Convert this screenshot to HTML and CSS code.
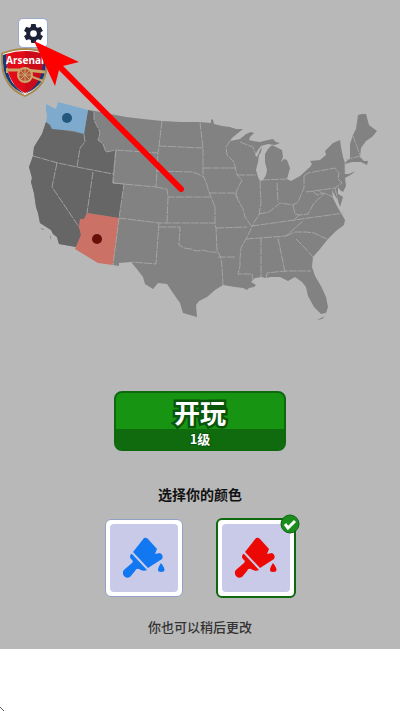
FILE: index.html
```
<!DOCTYPE html>
<html lang="zh-CN">
<head>
  <meta charset="UTF-8" />
  <meta name="viewport" content="width=device-width, initial-scale=1" />
  <title>开玩</title>
  <link rel="stylesheet" href="styles.css">
</head>
<body>
  <main class="screen">
    <header class="topbar">
      <button class="settings-btn" type="button" aria-label="设置">
        <svg viewBox="0 0 24 24" width="23" height="23"><path fill="#1c2138" d="M19.4 13c0-.3.1-.6.1-1s0-.7-.1-1l2.1-1.600a.5.5 0 0 0 .1-.6l-2-3.500a.5.5 0 0 0-.6-.2l-2.500 1a7 7 0 0 0-1.700-1l-.4-2.600a.5.5 0 0 0-.5-.5h-4a.5.5 0 0 0-.5.5L9.100 5.100a7 7 0 0 0-1.700 1l-2.500-1a.5.5 0 0 0-.6.2l-2 3.500a.5.5 0 0 0 .1.6L4.500 11a8 8 0 0 0 0 2l-2.100 1.600a.5.5 0 0 0-.1.6l2 3.500c.1.2.4.3.6.2l2.500-1c.5.4 1.100.7 1.700 1l.4 2.600c0 .3.2.5.5.5h4c.3 0 .5-.2.5-.5l.4-2.600a7 7 0 0 0 1.700-1l2.500 1c.2.1.5 0 .6-.2l2-3.500a.5.5 0 0 0-.1-.6zM12 15.500a3.500 3.500 0 1 1 0-7 3.500 3.500 0 0 1 0 7z"/></svg>
      </button>
    </header>

    <svg class="club-badge" viewBox="0 0 50 52" role="img" aria-label="Arsenal">
      <path fill="#a88a50" d="M1 6Q13 1 25 1t23 5q1 20-5 30-6 9-18 14Q12 45 7 36 0 26 1 6z"/>
      <path fill="#fff" d="M3 7Q14 3 25 3t21 4q1 18-5 28-5 8-16 13Q14 43 9 35 2 26 3 7z"/>
      <path fill="#123a78" d="M3 8l3-1q0 18 6 28 5 7 13 12Q14 43 9 35 2 26 3 8zM46 8l-3-1q0 18-6 28-5 7-12 12 11-5 16-12 6-9 5-27z"/>
      <path fill="#e30b17" d="M6 7q9-3 19-3t18 3q1 18-5 27-4 8-13 12-9-4-13-12Q6 25 6 7z"/>
      <path fill="#b80c1b" d="M25 4q10 0 18 3 1 18-5 27-4 8-13 12z" opacity=".55"/>
      <g stroke="#c9a66a" fill="none">
        <path stroke-width="3" d="M7 23h18l20 2"/>
        <path stroke-width="2" d="M30 29l13 5M7 21v5"/>
        <circle cx="25" cy="28" r="7" stroke-width="2" fill="#b8543b"/>
        <path stroke-width="1" d="M25 21v14M18 28h14M20 23l10 10M30 23L20 33"/>
      </g>
      <text class="club-name" x="25" y="17" text-anchor="middle">Arsenal</text>
    </svg>

    <svg class="arrow" viewBox="0 0 160 160" aria-hidden="true">
      <path stroke="#fe0000" stroke-width="6" stroke-linecap="round" d="M27 24l124 125"/>
      <path fill="#fe0000" d="M4 1l45 21-16 4-4 4-4 16z"/>
    </svg>

    <svg class="map" viewBox="0 96 400 230" role="img" aria-label="美国地图">
      <path class="land" d="M88 110L95 111 110 114 126 117 143 119 162 121 181 122 200 122 211 123 211 119 213 120 214 124 222 126 230 127 236 129 243 129 238 133 232 138 230 141 235 140 240 139 246 134 251 132 254 133 250 137 249 140 253 141 260 142 268 140 273 139 276 142 280 143 275 145 268 144 261 146 258 150 255 155 257 157 260 150 262 147 261 152 259 155 258 162 256 170 258 177 260 181 263 180 266 175 267 170 265 162 265 154 268 149 272 145 278 148 282 150 283 157 281 162 284 159 287 160 290 168 287 179 291 181 300 176 310 167 312 164 310 161 320 160 326 155 325 151 333 143 340 140 341 147 343 157 345 163 350 158 350 144 353 135 356 129 358 115 362 114 366 114 369 125 377 131 372 137 366 141 361 148 360 157 364 161 368 161 367 165 361 162 352 162 345 164 345 174 349 174 355 171 352 174 345 178 346 186 343 192 340 190 338 187 338 194 343 197 340 207 338 201 334 194 332 190 333 198 338 208 341 213 345 220 344 225 336 231 328 239 320 249 313 257 312 267 315 276 321 286 326 297 328 307 326 313 321 314 314 307 308 296 306 287 302 282 295 277 288 281 280 277 271 277 265 278 262 277 255 278 251 282 256 285 254 287 249 288 247 290 243 288 235 287 223 285 215 290 207 297 199 301 196 305 197 317 190 315 183 313 180 303 173 293 167 284 158 283 153 289 145 284 143 277 136 268 131 262 119 263 119 266 113 265 76 247 59 244 57 237 53 234 51 230 40 223 38 213 36 207 35 200 34 193 31 182 32 178 29 167 33 156 34 147 42 134 46 122z"/>
      <path class="land" d="M325 316l-8 4 5-1zM40 228l4 1-1 1zM50 237l1-2 0 5z"/>
      <path class="dark" d="M46 122L63 130 84 134 88 110 94 112 94 120 99 129 100 133 98 140 102 143 106 152 115 150 112 183 124 184 119 218 87 213 84 219 80 219 79 227 81 235 76 247 59 244 57 237 53 234 51 230 40 223 38 213 36 207 35 200 34 193 31 182 32 178 29 167 33 156 34 147 42 134z"/>
      <path class="blue" d="M46 104L52 107 56 109 58 102 73 106 88 110 84 134 74 131 63 130 52 129 50 125 46 122 47 117 46 110z"/>
      <path class="red" d="M87 213L119 218 113 265 98 263 75 249 81 235 79 227 80 219 84 219z"/>
      <g class="borders">
        <path d="M84 134l1 8-5 6-3 19M33 156l25 7 19 4 36 7M57 163l-5 24 27 40M93 172l-6 41M94 112l0 8 5 10 1 3-2 7 5 4 3 8 10-2"/>
        <path d="M116 150l42 3-2 34-43-4zM113 183l11 1-5 34-6 47M156 187l11 2 1 8h42M168 197l-1 26M119 218l40 5h56M159 223l-3 41-25-2M159 227h21l-1 18 5 3 7 1 5 2 7-1 7 2 7 0"/>
        <path d="M162 121l-3 25-1 7M159 146l44 2M157 171l35 1 6 2 6 3 3 8 2 7 6 15M200 122l3 26 0 27M203 168h33M209 193h26l2 5M215 207l0 17 1 4 1 22 4 8 1 9 1 18M216 228l31-1M218 257h17"/>
        <path d="M230 141L226 147 227 155 234 162 237 175 242 180 236 192 238 200 243 209 245 217 252 227 246 239 241 248 240 258 240 266 238 274H252L253 280M237 175H256M240 142L253 147 256 155M260 181L261 203 259 215 254 222 252 227M259 214L269 212 280 203 293 205M277 183L278 202M262 180L287 179M304 176L304 188 298 202 293 205"/>
        <path d="M252 226L344 213M246 239L286 236 303 221M261 238V277M278 238L285 272M266 278L267 273 285 271 311 271M286 236L295 232 306 232 314 233 327 239M296 239L304 247 313 257"/>
        <path d="M293 205L295 214 300 215 308 214 314 203 324 194 318 191M299 215L293 221M304 176L308 173 335 168 339 173 338 179 342 183 335 188 306 192M313 191L317 195 324 193 333 197M335 188L338 201M345 163V174M345 160L360 156M353 136L360 155"/>
      </g>
      <circle cx="67" cy="118" r="5" fill="#23577d"/>
      <circle cx="97" cy="239" r="5" fill="#67100a"/>
    </svg>

    <button class="play-btn" type="button">
      <span class="play-label">开玩</span>
      <span class="play-level">1级</span>
    </button>

    <fieldset class="colors">
      <legend>选择你的颜色</legend>
      <div class="swatches">
        <label class="swatch swatch-blue">
          <input type="radio" name="color" value="blue" aria-label="蓝色">
          <svg class="brush" viewBox="0 0 42 42"><path d="M21 1q2-1 4 1l9 10-2 5 5-1q4 2 2 6L25 31 10 15zM9 17l15 16q-4 2-8-1-3-1-4 2l-5 6q-4 2-6-1-3-4 1-7l7-6q2-2-1-4-2-2 0-5zM38 26q7 9 0 9-6 0 0-9z"/></svg>
        </label>
        <label class="swatch swatch-red">
          <input type="radio" name="color" value="red" aria-label="红色" checked>
          <svg class="brush" viewBox="0 0 42 42"><path d="M21 1q2-1 4 1l9 10-2 5 5-1q4 2 2 6L25 31 10 15zM9 17l15 16q-4 2-8-1-3-1-4 2l-5 6q-4 2-6-1-3-4 1-7l7-6q2-2-1-4-2-2 0-5zM38 26q7 9 0 9-6 0 0-9z"/></svg>
          <svg class="check" viewBox="0 0 20 20"><circle cx="10" cy="10" r="9" fill="#1b8d1b" stroke="#0c640f" stroke-width="1"/><path d="M5 10l3 4 7-7" fill="none" stroke="#fff" stroke-width="3"/></svg>
        </label>
      </div>
    </fieldset>

    <p class="hint">你也可以稍后更改</p>
  </main>

  <footer class="bottom">
    <svg viewBox="0 0 4 4" width="4" height="4" aria-hidden="true"><path d="M0 0l4 4" stroke="#555"/></svg>
  </footer>
</body>
</html>
```
FILE: styles.css
```
* {
  box-sizing: border-box;
}

body {
  margin: 0;
  min-height: 100vh;
  display: flex;
  flex-direction: column;
  background: #fff;
  font-family: "Noto Sans CJK SC", sans-serif;
}

svg {
  display: block;
}

.screen {
  position: relative;
  display: flex;
  flex-direction: column;
  align-items: center;
  padding-bottom: 11px;
  background: #b8b8b8;
}

.topbar {
  width: 100%;
  height: 96px;
  padding: 18px;
}

.settings-btn {
  display: flex;
  align-items: center;
  justify-content: center;
  width: 30px;
  height: 30px;
  padding: 0;
  background: #fff;
  border: 1px solid #9ba8d0;
  border-radius: 5px;
}

/* badge and pointer lie over the map */
.club-badge {
  position: absolute;
  top: 47px;
  left: 0;
  width: 50px;
  height: 52px;
}

.club-name {
  font: bold 10px "Noto Sans", sans-serif;
  fill: #fff;
}

.arrow {
  position: absolute;
  top: 40px;
  left: 30px;
  width: 160px;
  height: 160px;
}

.map {
  width: 100%;
}

.land {
  fill: #828282;
}

.dark {
  fill: #666;
}

.blue {
  fill: #7eabcd;
}

.red {
  fill: #cb7165;
}

.borders {
  fill: none;
  stroke: #adadad;
  stroke-width: 1;
  stroke-dasharray: 8 1;
  opacity: 0.8;
}

.play-btn {
  display: flex;
  flex-direction: column;
  width: 172px;
  margin-top: 65px;
  padding: 0;
  overflow: hidden;
  border: 2px solid #0d680e;
  border-radius: 8px;
  background: #189413;
  color: #fff;
  font-family: inherit;
  font-weight: 700;
}

.play-label,
.play-level {
  width: 100%;
  -webkit-text-stroke: 5px #0b550b;
  paint-order: stroke fill;
}

.play-label {
  padding-top: 2px;
  font-size: 26px;
  line-height: 34px;
}

.play-level {
  background: #0f6b0d;
  font-size: 13px;
  line-height: 20px;
  -webkit-text-stroke-width: 2px;
}

.colors {
  margin: 32px 0 0;
  padding: 0;
  border: 0;
}

legend {
  margin: 0 auto;
  padding: 0;
  color: #111;
  font-size: 14px;
  font-weight: 700;
  line-height: 22px;
}

.swatches {
  display: flex;
  align-items: center;
  gap: 33px;
  margin-top: 13px;
}

.swatch {
  position: relative;
  display: flex;
  align-items: center;
  justify-content: center;
  width: 78px;
  height: 78px;
  border: 1px solid #91a0c5;
  border-radius: 6px;
  background: #fff;
}

.swatch input {
  position: absolute;
  inset: 0;
  margin: 0;
  opacity: 0;
}

.swatch:has(input:checked) {
  width: 80px;
  height: 80px;
  border: 2px solid #0d680e;
}

.brush {
  width: 68px;
  height: 68px;
  padding: 13px;
  border-radius: 4px;
  background: #c9c9e8;
}

.swatch-blue {
  fill: #1278f2;
}

.swatch-red {
  fill: #ec0805;
}

.check {
  position: absolute;
  top: -6px;
  right: -6px;
  width: 20px;
  height: 20px;
}

.hint {
  margin: 18px 0 0;
  color: #333;
  font-size: 13px;
  font-weight: 500;
  line-height: 22px;
}

.bottom {
  flex: 1;
  display: flex;
  align-items: flex-end;
}
```
